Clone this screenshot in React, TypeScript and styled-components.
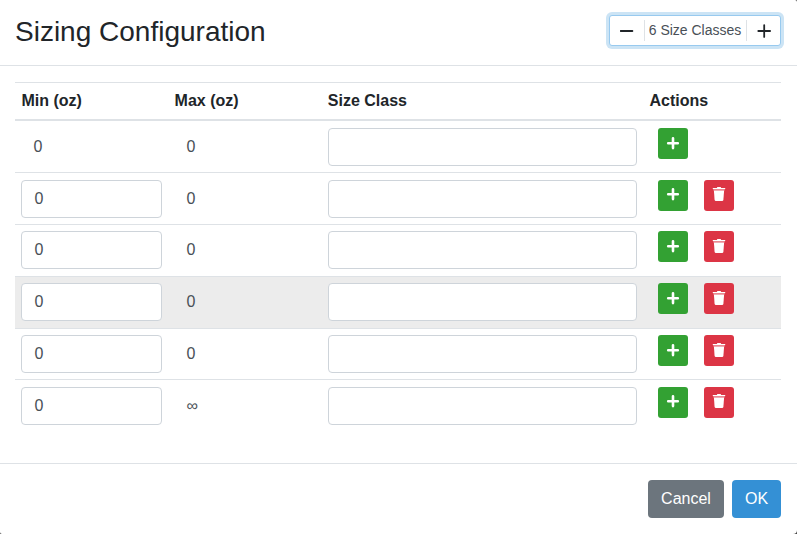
import React from 'react';
import styled, { createGlobalStyle, css } from 'styled-components';

const GlobalStyle = createGlobalStyle`
  *, *::before, *::after { box-sizing: border-box; }
  body {
    margin: 0;
    background: #444;
    color: #212529;
    font: 400 16px/24px "Liberation Sans", Arial, sans-serif;
  }
  button, input { font: inherit; margin: 0; }
`;

const Modal = styled.div`
  display: flex;
  flex-direction: column;
  height: 534px;
  background: #fff;
  border-radius: 0 2px 4px 2px;
  overflow: hidden;
`;

const Header = styled.header`
  display: flex;
  justify-content: space-between;
  align-items: flex-start;
  height: 66px;
  padding: 15px 16px 0 15px;
  border-bottom: 1px solid #dee2e6;
`;

const Title = styled.h3`
  margin: 0;
  font-size: 28px;
  font-weight: 400;
  line-height: 34px;
`;

const Stepper = styled.div`
  display: flex;
  align-items: center;
  width: 172px;
  height: 31px;
  border: 1px solid #98caef;
  border-radius: 3px;
  background: #fff;
  box-shadow: 0 0 0 3px #cce4f5;
`;

const StepButton = styled.button<{ $width: number }>`
  display: flex;
  align-items: center;
  justify-content: center;
  width: ${p => p.$width}px;
  height: 29px;
  padding: 0;
  border: 0;
  background: none;
  color: #212529;
`;

const StepValue = styled.output`
  flex: 1;
  height: 21px;
  padding-right: 1px;
  border: solid #dee2e6;
  border-width: 0 1px;
  color: #495057;
  font-size: 14px;
  line-height: 20px;
  text-align: center;
  white-space: nowrap;
`;

const Body = styled.main`
  flex: 1;
  padding: 16px 16px 0 15px;
`;

const columns = css`
  display: grid;
  grid-template-columns: 153.2px 153.2px 321.8px 1fr;
`;

const HeadRow = styled.div`
  ${columns}
  height: 38.4px;
  padding-top: 6.4px;
  border-top: 1px solid #dee2e6;
  font-weight: 700;
`;

const Label = styled.div`
  padding-left: 6.4px;
  line-height: 23px;
`;

const Row = styled.div<{ $active?: boolean; $first?: boolean }>`
  ${columns}
  height: 51.8px;
  padding-top: 6.4px;
  border-top: 1px solid #dee2e6;
  background: ${p => (p.$active ? '#ececec' : 'transparent')};
  ${p => p.$first && css`box-shadow: 0 -1px 0 #dee2e6;`}
`;

const Cell = styled.div`
  padding: 0 6.4px;
`;

const Field = styled.input`
  display: block;
  width: 100%;
  height: 38px;
  padding: 6px 12px;
  border: 1px solid #ced4da;
  border-radius: 4px;
  background: #fff;
  color: #495057;
  outline: 0;
`;

const Plain = styled.div`
  padding: 7px 12px;
  color: #495057;
`;

const Actions = styled.div`
  display: flex;
  align-items: flex-start;
  gap: 16px;
  padding-left: 14.4px;
`;

const ActionButton = styled.button<{ $danger?: boolean; $iconTop: number }>`
  display: flex;
  justify-content: center;
  align-items: flex-start;
  width: 30px;
  height: 31px;
  padding: ${p => p.$iconTop}px 0 0;
  border: 0;
  border-radius: 3px;
  background: ${p => (p.$danger ? '#dc3545' : '#33a133')};
  color: #fff;
`;

const Footer = styled.footer`
  display: flex;
  justify-content: flex-end;
  gap: 8px;
  height: 71px;
  padding: 16px 16px 0;
  border-top: 1px solid #dee2e6;
`;

const FooterButton = styled.button<{ $primary?: boolean }>`
  width: ${p => (p.$primary ? 49 : 76)}px;
  height: 38px;
  padding: 0;
  border: 0;
  border-radius: 4px;
  background: ${p => (p.$primary ? '#3490d5' : '#6c757d')};
  color: #fff;
`;

const StepIcon = ({ plus }: { plus?: boolean }) => (
  <svg width="14" height="14" viewBox="0 0 14 14" fill="none" stroke="currentColor" strokeWidth="1.8" strokeLinecap="round">
    <path d={plus ? 'M1.3 7H13.1M7.2 1.1V12.9' : 'M.6 7H12.4'} />
  </svg>
);

const PlusIcon = () => (
  <svg width="14" height="14" viewBox="0 0 14 14" fill="none" stroke="currentColor" strokeWidth="2.6" strokeLinecap="round">
    <path d="M2.2 7.2H11.8M7 2.2V12.1" />
  </svg>
);

const TrashIcon = () => (
  <svg width="14" height="14" viewBox="0 0 14 14" fill="currentColor">
    <path d="M.8 1h4l.6-.9h3.2l.6.9h4v1.1H.8z" />
    <path d="M1.2 2.3h11.6v1H1.2z" opacity=".6" />
    <path d="M1.9 3.4h10.2l-.7 9.4q-.1 1.2-1.3 1.2H3.9q-1.2 0-1.3-1.2z" />
  </svg>
);

const rows = [
  { min: '0', max: '0', fixed: true, iconTop: 8 },
  { min: '0', max: '0', iconTop: 7 },
  { min: '0', max: '0', iconTop: 8 },
  { min: '0', max: '0', iconTop: 8, active: true },
  { min: '0', max: '0', iconTop: 8 },
  { min: '0', max: '∞', iconTop: 7 },
];

export default function App() {
  return (
    <>
      <GlobalStyle />
      <Modal>
        <Header>
          <Title>Sizing Configuration</Title>
          <Stepper>
            <StepButton $width={34} aria-label="Remove size class"><StepIcon /></StepButton>
            <StepValue>6 Size Classes</StepValue>
            <StepButton $width={33} aria-label="Add size class"><StepIcon plus /></StepButton>
          </Stepper>
        </Header>
        <Body>
          <HeadRow>
            <Label>Min (oz)</Label>
            <Label>Max (oz)</Label>
            <Label>Size Class</Label>
            <Label>Actions</Label>
          </HeadRow>
          {rows.map((row, i) => (
            <Row key={i} $active={row.active} $first={i === 0}>
              <Cell>{row.fixed ? <Plain>{row.min}</Plain> : <Field defaultValue={row.min} />}</Cell>
              <Cell><Plain>{row.max}</Plain></Cell>
              <Cell><Field aria-label="Size class" /></Cell>
              <Actions>
                <ActionButton $iconTop={row.iconTop} aria-label="Add"><PlusIcon /></ActionButton>
                {!row.fixed && (
                  <ActionButton $danger $iconTop={row.iconTop} aria-label="Delete"><TrashIcon /></ActionButton>
                )}
              </Actions>
            </Row>
          ))}
        </Body>
        <Footer>
          <FooterButton>Cancel</FooterButton>
          <FooterButton $primary>OK</FooterButton>
        </Footer>
      </Modal>
    </>
  );
}
